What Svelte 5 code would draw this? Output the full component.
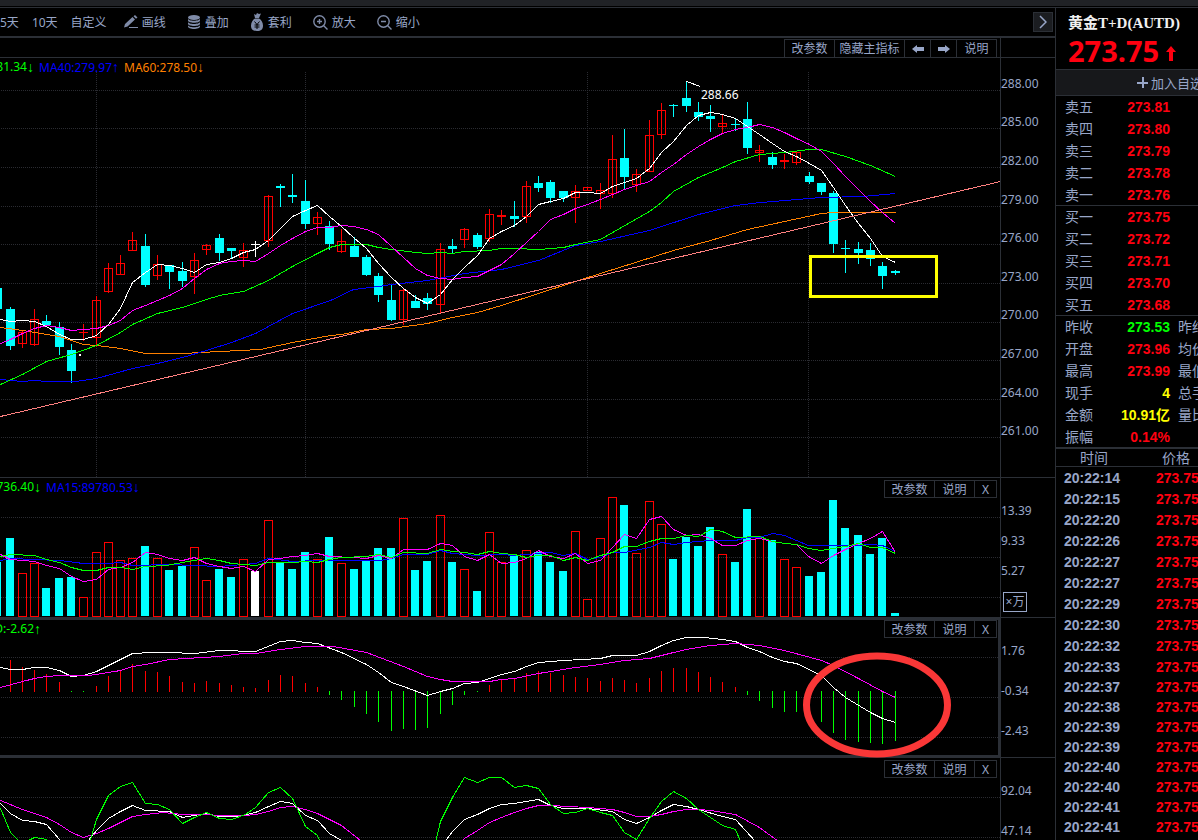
<script>
	// up = hollow red, down = solid cyan, flat = white
	// high, body top, body bottom, low, direction, volume top, macd end
	const days = [
		[288, 288, 309, 309, 'down', 562, 691],
		[307, 309, 346, 350, 'down', 538, 660],
		[330, 332, 344, 348, 'up', 573, 667],
		[309, 319, 345, 346, 'up', 563, 670],
		[315, 321, 325, 325, 'down', 588, 674],
		[322, 327, 347, 355, 'down', 578, 682],
		[344, 350, 371, 383, 'down', 577, 692],
		[324, 332, 333, 341, 'up', 597, 692],
		[296, 300, 338, 347, 'up', 552, 686],
		[263, 268, 292, 293, 'up', 542, 676],
		[255, 263, 275, 275, 'up', 560, 670],
		[232, 240, 251, 251, 'up', 558, 664],
		[234, 246, 285, 287, 'down', 546, 671],
		[255, 264, 276, 280, 'up', 558, 672],
		[265, 265, 272, 289, 'down', 570, 676],
		[262, 271, 281, 287, 'down', 566, 682],
		[253, 260, 277, 294, 'up', 547, 683],
		[244, 245, 250, 255, 'up', 580, 681],
		[234, 238, 253, 261, 'down', 569, 683],
		[248, 248, 251, 259, 'down', 577, 685],
		[243, 250, 258, 267, 'up', 559, 687],
		[241, 244, 245, 257, 'flat', 571, 688],
		[195, 196, 241, 247, 'up', 520, 680],
		[184, 186, 188, 207, 'down', 562, 675],
		[174, 195, 197, 203, 'down', 569, 676],
		[180, 201, 224, 229, 'down', 552, 683],
		[212, 217, 224, 235, 'up', 559, 687],
		[221, 226, 244, 250, 'down', 537, 695],
		[229, 241, 252, 253, 'up', 563, 700],
		[237, 246, 257, 257, 'down', 569, 707],
		[255, 257, 275, 276, 'down', 561, 714],
		[273, 276, 295, 302, 'down', 548, 722],
		[285, 300, 320, 321, 'down', 548, 731],
		[288, 290, 320, 325, 'up', 518, 729],
		[295, 301, 308, 308, 'down', 570, 730],
		[293, 298, 304, 310, 'down', 561, 728],
		[243, 249, 305, 313, 'up', 515, 714],
		[239, 246, 249, 253, 'down', 562, 705],
		[228, 229, 240, 248, 'up', 569, 695],
		[233, 235, 247, 249, 'down', 591, 692],
		[209, 214, 239, 242, 'up', 532, 685],
		[210, 215, 217, 225, 'up', 562, 680],
		[201, 216, 219, 227, 'down', 555, 679],
		[181, 186, 217, 223, 'up', 550, 673],
		[176, 183, 188, 192, 'down', 552, 671],
		[180, 182, 198, 203, 'down', 562, 673],
		[191, 191, 198, 202, 'down', 571, 675],
		[185, 191, 198, 223, 'up', 531, 677],
		[187, 187, 191, 191, 'up', 599, 678],
		[183, 190, 194, 209, 'up', 538, 681],
		[135, 159, 194, 198, 'up', 497, 678],
		[129, 158, 177, 189, 'down', 505, 680],
		[169, 174, 185, 192, 'up', 553, 683],
		[120, 135, 172, 172, 'up', 501, 678],
		[103, 110, 135, 139, 'up', 524, 671],
		[104, 105, 106, 117, 'down', 559, 668],
		[82, 98, 106, 112, 'down', 537, 668],
		[102, 112, 117, 121, 'down', 546, 672],
		[105, 116, 119, 132, 'down', 527, 677],
		[115, 123, 127, 133, 'up', 554, 682],
		[118, 124, 125, 131, 'down', 562, 687],
		[102, 119, 148, 154, 'down', 509, 695],
		[145, 150, 153, 162, 'up', 537, 701],
		[152, 157, 165, 169, 'down', 540, 708],
		[154, 160, 162, 169, 'up', 559, 712],
		[152, 152, 163, 165, 'up', 567, 712],
		[172, 176, 182, 184, 'down', 576, 714],
		[183, 183, 192, 195, 'down', 572, 722],
		[191, 193, 244, 253, 'down', 500, 733],
		[240, 248, 249, 273, 'down', 528, 740],
		[242, 249, 253, 264, 'down', 535, 742],
		[243, 250, 259, 266, 'down', 554, 743],
		[262, 266, 276, 289, 'down', 538, 744],
		[270, 271, 273, 275, 'down', 613, 741]
	].map(([high, top, bottom, low, dir, vol, macd], i) => ({
		x: Math.floor(10.05 + 12.292 * (i - 1)),
		high, top, bottom, low, dir, vol, macd
	}))

	const priceLines = {
		ma60: '0,327 22,330 59,336 83,344 96,345 120,348 145,353 182,353 219,351 260,349 292,342 330,335 341,334 366,329 391,328 427,323 452,317 477,312 501,305 538,293 575,281 600,273 673,250 710,240 747,229 784,221 821,213 833,212 895,212',
		ma40: '0,379 22,381 34,380 46,381 75,381 96,378 132,368 157,363 182,357 206,350 231,342 255,333 292,313 330,300 353,289 378,286 391,284 427,280 464,273 501,269 538,260 575,245 600,241 649,230 698,214 735,205 760,202 821,197 862,196 895,193',
		ma20: '0,384 22,374 46,361 71,354 96,345 120,332 132,324 157,313 182,307 206,299 219,295 243,291 268,280 292,266 317,253 329,247 341,244 366,244 378,247 391,249 415,252 427,253 440,252 452,253 464,251 489,250 501,248 514,248 538,249 563,247 575,244 600,239 649,211 661,202 673,191 698,177 722,167 735,161 759,154 784,152 809,149 821,149 845,156 870,165 895,176',
		ma10: '0,343 10,339 22,333 34,328 46,325 59,327 71,330 83,329 96,328 108,325 120,320 132,310 145,305 157,300 169,295 182,288 194,278 206,269 219,263 231,261 243,260 255,261 268,253 280,245 292,238 305,231 317,227 329,227 341,225 353,226 366,229 378,234 391,246 403,257 415,268 427,275 440,278 452,279 464,277 477,276 489,270 501,264 514,253 526,242 538,231 550,219 563,214 575,208 587,204 600,199 612,194 624,189 636,185 649,181 661,172 673,164 686,154 698,146 710,139 722,133 735,129 747,127 759,124 772,127 784,132 796,138 809,144 821,151 833,163 845,176 858,189 870,201 882,212 895,223',
		ma5: '0,319 10,321 22,320 34,321 46,326 59,334 71,339 83,339 96,335 108,324 120,308 132,282 145,272 157,264 169,265 182,268 194,272 206,264 219,262 231,258 243,252 255,249 268,240 280,228 292,216 305,210 317,205 329,216 341,226 353,237 366,248 378,263 391,277 403,288 415,297 427,303 440,294 452,279 464,267 477,255 489,238 501,231 514,225 526,216 538,204 550,201 563,198 575,192 587,192 600,193 612,186 624,182 636,178 649,168 661,152 673,141 686,125 698,115 710,112 722,114 735,118 747,126 759,134 772,143 784,151 796,156 809,163 821,170 833,187 845,205 858,223 870,238 882,256 895,262',
		trend: '0,416 1000,181'
	}
	const volumeLines = {
		ma40: '0,560 10,558 34,559 59,560 83,563 108,563 120,562 132,565 169,564 194,565 219,566 243,564 255,563 268,558 292,561 317,560 380,560 391,558 403,554 427,554 440,550 452,553 477,555 501,554 514,555 550,552 563,555 575,553 587,559 600,557 612,552 624,552 649,547 661,542 673,544 686,542 710,540 735,540 747,537 759,537 772,533 784,535 796,540 808,545 858,545 870,544 882,545 895,551',
		ma10: '0,554 10,559 22,560 34,561 46,565 59,568 71,576 83,581 96,579 108,569 120,567 132,562 145,552 157,554 169,558 182,560 194,557 206,563 219,566 231,568 243,566 255,571 268,559 280,558 292,556 305,555 317,553 329,556 353,557 366,558 378,555 391,558 403,549 427,549 440,543 452,545 464,556 477,560 489,554 501,563 514,562 526,558 538,550 550,556 563,558 575,553 587,563 600,560 612,547 624,534 636,538 649,519 661,516 673,529 686,535 698,534 710,538 722,545 735,545 747,540 759,538 772,541 784,543 796,544 808,556 821,563 833,555 845,549 858,543 870,538 882,531 895,552',
		ma20: '0,556 10,554 34,555 46,559 59,562 71,567 83,570 96,570 108,567 120,567 132,569 145,566 166,565 182,562 206,558 219,560 231,563 255,565 268,562 292,562 305,561 317,562 329,559 341,557 366,556 378,554 391,557 403,552 427,553 440,549 452,551 464,552 477,554 489,551 501,553 514,554 526,557 538,555 550,555 563,560 575,557 587,560 600,555 612,552 624,546 636,546 649,541 661,538 673,538 686,535 698,536 710,529 722,531 735,537 759,536 772,541 784,543 796,544 808,548 821,550 833,548 845,546 858,543 870,547 882,547 895,553'
	}
	const macdLines = {
		ma5: '0,667 10,669 22,669 34,667 46,667 59,670 71,676 83,675 96,671 132,653 151,652 169,652 194,653 219,650 255,651 280,641 292,640 305,642 317,643 341,652 366,664 378,672 391,682 403,686 427,695 440,691 452,688 464,683 477,682 489,678 501,674 514,671 526,666 538,662 563,660 600,658 612,655 636,655 649,651 661,645 673,640 686,637 704,637 722,639 735,641 747,647 759,651 772,657 784,661 796,663 821,675 833,687 845,697 870,712 882,718 895,722',
		ma10: '0,687 22,681 34,678 46,676 59,675 88,675 96,674 120,670 132,666 145,664 169,659 219,656 243,653 255,653 280,649 305,646 333,646 366,652 403,666 427,676 440,679 452,681 489,681 501,679 514,678 538,673 575,667 600,664 624,660 649,658 673,652 686,649 710,645 735,643 759,645 784,650 821,660 833,665 858,678 882,691 895,697'
	}
	const kdjLines = {
		ma5: '0,803 10,813 22,820 34,821 46,824 59,839 64,846 83,846 96,830 108,818 120,811 132,805 145,810 169,811 182,817 194,815 206,813 219,816 238,816 255,812 268,806 280,801 292,803 305,815 317,820 329,833 341,840 353,850 438,850 452,831 464,819 477,814 489,808 501,804 514,803 526,801 538,799 550,805 563,808 587,808 612,811 624,819 636,823 649,817 661,810 673,804 686,806 698,809 722,816 735,819 755,841',
		ma10: '0,800 22,809 46,817 59,824 71,832 83,837 96,833 108,828 120,822 132,816 145,814 163,812 182,814 206,814 219,815 245,815 255,814 268,811 280,807 292,806 305,809 317,813 341,825 360,840 372,850 452,850 464,838 477,830 489,822 501,817 514,812 526,808 538,805 550,805 587,807 612,809 624,812 636,816 649,816 661,814 673,811 686,809 698,809 710,810 735,814 759,827 778,841',
		ma20: '0,808 10,832 18,840 28,840 34,837 46,839 52,846 88,846 96,819 108,795 120,786 132,782 145,803 157,804 169,809 182,823 194,817 206,812 219,818 231,819 245,814 255,807 268,792 280,787 292,798 305,826 317,835 322,846 434,846 440,821 452,797 464,777 477,782 489,777 501,777 514,787 526,785 538,788 550,804 563,813 575,812 587,808 600,812 612,815 624,832 636,839 649,818 661,801 673,791 686,798 698,809 722,825 735,829 742,846'
	}

	const priceGrid = [90, 128, 167, 206, 244, 283, 322, 360, 399, 437]
	const priceScale = ['288.00', '285.00', '282.00', '279.00', '276.00', '273.00', '270.00', '267.00', '264.00', '261.00']

	const quotes = [
		['卖五', '273.81', 'red'],
		['卖四', '273.80', 'red'],
		['卖三', '273.79', 'red'],
		['卖二', '273.78', 'red'],
		['卖一', '273.76', 'red'],
		['买一', '273.75', 'red'],
		['买二', '273.72', 'red'],
		['买三', '273.71', 'red'],
		['买四', '273.70', 'red'],
		['买五', '273.68', 'red'],
		['昨收', '273.53', 'green', '昨结'],
		['开盘', '273.96', 'red', '均价'],
		['最高', '273.99', 'red', '最低'],
		['现手', '4', 'yellow', '总手'],
		['金额', '10.91亿', 'yellow', '量比'],
		['振幅', '0.14%', 'red']
	]
	const trades = [
		'20:22:14', '20:22:15', '20:22:20', '20:22:26', '20:22:27', '20:22:27',
		'20:22:29', '20:22:30', '20:22:32', '20:22:33', '20:22:37', '20:22:38',
		'20:22:39', '20:22:39', '20:22:40', '20:22:40', '20:22:41', '20:22:41'
	]
</script>

{#snippet grid(rows)}
	{#each rows as y}
		<line class="grid" x1="1" x2="1000" y1={y + 0.5} y2={y + 0.5} />
	{/each}
{/snippet}

{#snippet curves(lines)}
	{#each Object.entries(lines) as [name, points]}
		<polyline class="curve {name}" {points} transform="translate(0.5 0.5)" />
	{/each}
{/snippet}

{#snippet panelTools()}
	<div class="tools over">
		<button class="wide">改参数</button>
		<button class="mid">说明</button>
		<button class="close">X</button>
	</div>
{/snippet}

<div class="app">
	<div class="strip"></div>
	<div class="body">
		<main>
			<nav>
				<div class="periods">
					<button>5天</button>
					<button>10天</button>
					<button>自定义</button>
				</div>
				<div class="actions">
					<button>
						<svg width="14" height="14" viewBox="0 0 14 14" fill="currentColor"><path d="M0 12.500l1-3.500 7.500-7 2.500 2.500-7.500 7zM9.500 1.300L11 0l2.500 2.500-1.500 1.300zM5 12h9v1H5z" /></svg>
						画线
					</button>
					<button>
						<svg width="14" height="14" viewBox="0 0 14 14" fill="currentColor"><ellipse cx="7" cy="2.500" rx="6" ry="2.500" /><path d="M1 3.500c0 3 12 3 12 0v2c0 3-12 3-12 0zM1 6.700c0 3 12 3 12 0v2c0 3-12 3-12 0zM1 9.900c0 3 12 3 12 0v1.600c0 3.300-12 3.300-12 0z" /></svg>
						叠加
					</button>
					<button>
						<svg width="14" height="18" viewBox="0 0 14 18"><path fill="currentColor" d="M4 1l2 1 1-2 2 1 2-.500L9 5H5zM5 5.500h4c2 1 4 4 4 7 0 4-2 5.500-6 5.500s-6-1.500-6-5.500c0-3 2-6 4-7z" /><path d="M4.500 8.500L7 11.500l2.500-3M7 11v5M4.500 12h5M4.500 14h5" fill="none" stroke="#000" /></svg>
						套利
					</button>
					<button>
						<svg width="15" height="15" viewBox="0 0 15 15" fill="none" stroke="currentColor" stroke-width="1.400"><circle cx="6.500" cy="6.500" r="5.700" /><path d="M10.500 10.500l4 4M4 6.500h5M6.500 4v5" /></svg>
						放大
					</button>
					<button>
						<svg width="15" height="15" viewBox="0 0 15 15" fill="none" stroke="currentColor" stroke-width="1.400"><circle cx="6.500" cy="6.500" r="5.700" /><path d="M10.500 10.500l4 4M4 6.500h5" /></svg>
						缩小
					</button>
				</div>
				<button class="fold" aria-label="收起">
					<svg width="8" height="14" viewBox="0 0 8 14" fill="none" stroke="currentColor" stroke-width="1.500"><path d="M1 1l6 6-6 6" /></svg>
				</button>
			</nav>

			<div class="head">
				<div class="tools">
					<button class="wide">改参数</button>
					<button class="widest">隐藏主指标</button>
					<button class="arrow" aria-label="左移"><svg width="12" height="8" viewBox="0 0 12 8" fill="currentColor"><path d="M0 4l5-4v2h7v4H5v2z" /></svg></button>
					<button class="arrow" aria-label="右移"><svg width="12" height="8" viewBox="0 0 12 8" fill="currentColor"><path d="M12 4L7 0v2H0v4h7v2z" /></svg></button>
					<button class="mid">说明</button>
				</div>
				<div class="gutter"></div>
			</div>

			<section class="price">
				<div class="chart">
					<svg viewBox="0 58 1000 419" shape-rendering="crispEdges">
						{@render grid(priceGrid)}
						{#each [96, 305, 587, 808] as x}
							<line class="grid" x1={x + 0.5} x2={x + 0.5} y1="72" y2="477" />
						{/each}
						{#each days as d}
							<g class={d.dir}>
								<rect class="fill" x={d.x} y={d.high} width="1" height={d.low - d.high} />
								{#if d.dir == 'up' && d.bottom - d.top > 2}
									<rect class="hollow" x={d.x - 3.5} y={d.top + 0.5} width="8" height={d.bottom - d.top - 1} />
								{:else}
									<rect class="fill" x={d.x - 4} y={d.top} width="9" height={d.bottom - d.top} />
								{/if}
							</g>
						{/each}
						{@render curves(priceLines)}
						<rect x="79" y="354" width="2" height="2" fill="#fff" />
						<path class="curve ma5" d="M686.500 81.500l14 5" />
						<text x="701" y="99">288.66</text>
						<rect class="mark" x="810.500" y="256.500" width="126" height="40" />
					</svg>
					<div class="legend">
						<span class="first ma20">81.34<i>↓</i></span>
						<span class="ma40">MA40:279.97<i>↑</i></span>
						<span class="ma60">MA60:278.50<i>↓</i></span>
					</div>
				</div>
				<div class="axis">
					{#each priceScale as p}<span>{p}</span>{/each}
				</div>
			</section>

			<section class="volume">
				<div class="chart">
					<svg viewBox="0 478 1000 139" shape-rendering="crispEdges">
						{@render grid([517, 557, 597])}
						{#each days as d}
							<g class={d.dir}>
								{#if d.dir == 'up'}
									<rect class="hollow" x={d.x - 3.5} y={d.vol + 0.5} width="8" height={616 - d.vol} />
								{:else}
									<rect class="fill" x={d.x - 4} y={d.vol} width="8" height={616 - d.vol} />
								{/if}
							</g>
						{/each}
						{@render curves(volumeLines)}
					</svg>
					<div class="legend">
						<span class="second ma20">736.40<i>↓</i></span>
						<span class="ma40">MA15:89780.53<i>↓</i></span>
					</div>
					{@render panelTools()}
				</div>
				<div class="axis">
					<span>13.39</span>
					<span>9.33</span>
					<span>5.27</span>
					<b>×万</b>
				</div>
			</section>

			<section class="macd">
				<div class="chart">
					<svg viewBox="0 620 1000 135" shape-rendering="crispEdges">
						{@render grid([657, 697, 737])}
						{#each days as d}
							{#if d.macd < 691}
								<rect class="rise" x={d.x} y={d.macd} width="1" height={692 - d.macd} />
							{:else if d.macd > 691}
								<rect class="fall" x={d.x} y="691" width="1" height={d.macd - 691} />
							{/if}
						{/each}
						{@render curves(macdLines)}
						<rect x="998" y="620" width="2" height="135" fill="#2b2f36" />
						<ellipse class="ring" cx="877" cy="705" rx="70.500" ry="49" shape-rendering="auto" />
					</svg>
					<div class="legend">
						<span class="second ma20">D:-2.62<i>↑</i></span>
					</div>
					{@render panelTools()}
				</div>
				<div class="axis">
					<span>1.76</span>
					<span>-0.34</span>
					<span>-2.43</span>
				</div>
			</section>

			<section class="kdj">
				<div class="chart">
					<svg viewBox="0 758 1000 82" shape-rendering="crispEdges">
						{@render grid([797, 837])}
						{@render curves(kdjLines)}
					</svg>
					{@render panelTools()}
				</div>
				<div class="axis">
					<span>92.04</span>
					<span>47.14</span>
				</div>
			</section>
		</main>

		<aside>
			<header>
				<h1>黄金T+D(AUTD)</h1>
				<p>
					273.75
					<svg width="10" height="15" viewBox="0 0 10 15" fill="currentColor"><path d="M5 0l5 6H7v9H3V6H0z" /></svg>
				</p>
			</header>
			<button class="add">
				<svg width="11" height="11" viewBox="0 0 11 11" fill="currentColor"><path d="M5 0h2v5h4v2H7v4H5V7H0V5h5z" /></svg>
				加入自选
			</button>
			<table class="quotes">
				<tbody>
					{#each quotes as [label, value, color, extra], i}
						<tr class:line={i == 5 || i == 10}>
							<th>{label}</th>
							<td class={color}>{value}</td>
							<th>{extra ?? ''}</th>
						</tr>
					{/each}
				</tbody>
			</table>
			<table class="trades">
				<thead>
					<tr><th>时间</th><th>价格</th></tr>
				</thead>
				<tbody>
					{#each trades as t}
						<tr><td>{t}</td><td class="red">273.75</td></tr>
					{/each}
				</tbody>
			</table>
		</aside>
	</div>
</div>

<style>
	:global(body) {
		background: #000;
		overflow: hidden;
	}

	.app {
		font-family: "Noto Sans", "Noto Sans CJK SC", sans-serif;
		font-size: 12px;
		color: #98a6c8;
		background: #000;
	}
	.strip {
		height: 6px;
		background: #202226;
		border-bottom: 1px solid #000;
	}
	.body {
		display: flex;
		border-top: 1px solid #2b2f36;
	}
	main {
		flex: 1;
		min-width: 0;
	}
	button {
		display: flex;
		align-items: center;
		justify-content: center;
		padding: 0;
		border: 0;
		background: none;
		color: inherit;
		font: inherit;
		white-space: nowrap;
	}

	nav {
		display: flex;
		align-items: center;
		height: 28px;
		border-bottom: 2px solid #2b2f36;
	}
	.periods {
		display: flex;
		gap: 13px;
	}
	.actions {
		display: flex;
		gap: 21px;
		margin-left: 17px;
	}
	.actions button {
		gap: 4px;
	}
	.actions svg {
		color: #7f8ba8;
	}
	.fold {
		width: 20px;
		height: 20px;
		margin-left: auto;
		margin-right: 2px;
		background: #1b1d21;
		border: 1px solid #2b2f36;
		box-sizing: border-box;
	}

	.head {
		display: flex;
		justify-content: flex-end;
		align-items: flex-end;
		height: 19px;
		border-bottom: 1px solid #2b2f36;
	}
	.gutter {
		align-self: stretch;
		width: 54px;
		margin-left: 3px;
		border-left: 1px solid #2b2f36;
	}
	.tools {
		display: flex;
	}
	.tools button {
		height: 18px;
		margin-left: -1px;
		padding-top: 1px;
		border: 1px solid #2b2f36;
		box-sizing: border-box;
		background: #000;
		line-height: 16px;
	}
	.head button {
		border-bottom: 0;
	}
	.over {
		position: absolute;
		top: 2px;
		right: 3px;
	}
	.macd .over, .macd .legend {
		top: 0;
	}
	.tools .wide { width: 51px; }
	.tools .widest { width: 71px; }
	.tools .arrow { width: 27px; }
	.tools .mid { width: 41px; }
	.tools .close { width: 23px; }

	section {
		display: flex;
	}
	.chart {
		position: relative;
		flex: 1;
		min-width: 0;
	}
	.chart > svg {
		display: block;
		width: 100%;
		height: auto;
	}
	.axis {
		display: flex;
		flex-direction: column;
		width: 55px;
		box-sizing: border-box;
		border-left: 1px solid #2b2f36;
	}
	.axis span {
		display: flex;
		align-items: center;
		height: 40px;
	}
	.price .chart, .price .axis {
		border-bottom: 1px solid #2b2f36;
	}
	.price .axis {
		padding: 6px 0 27px;
	}
	.price .axis span {
		flex: 1;
		height: auto;
	}
	.volume .axis {
		padding-top: 17px;
	}
	.volume .axis span {
		height: 30px;
	}
	.axis b {
		width: 22px;
		margin: 7px 0 0 2px;
		border: 1px solid #98a6c8;
		font-weight: normal;
		line-height: 18px;
		text-align: center;
	}
	.macd .chart {
		border-top: 3px solid #2b2f36;
		border-bottom: 3px solid #2b2f36;
		z-index: 1;
	}
	.macd .axis {
		padding-top: 12px;
		border-top: 1px solid #2b2f36;
	}
	.macd svg {
		overflow: visible;
	}
	.kdj .axis {
		padding-top: 12px;
		margin-top: -1px;
		border-top: 1px solid #2b2f36;
	}

	.legend {
		position: absolute;
		top: 0;
		left: 0;
		display: flex;
		gap: 5px;
		line-height: 18px;
	}
	.legend span {
		white-space: nowrap;
	}
	.legend .first, .legend .second {
		display: flex;
		justify-content: flex-end;
		width: 34px;
	}
	.legend .second {
		width: 41px;
	}
	.legend i {
		font: 14px/18px "Liberation Sans", sans-serif;
	}

	.grid {
		stroke: #2a2b31;
		stroke-dasharray: 1 1;
	}
	.curve {
		fill: none;
	}
	.ma5 { stroke: #fff; }
	.ma10 { stroke: #f0f; }
	.ma20 { stroke: #0f0; }
	.ma40 { stroke: #00f; }
	.ma60 { stroke: #ff8000; }
	.trend { stroke: #ff8080; }
	span.ma20 { color: #0f0; stroke: none; }
	span.ma40 { color: #00f; stroke: none; }
	span.ma60 { color: #ff8000; stroke: none; }
	.up .fill { fill: #f00; }
	.up .hollow { fill: none; stroke: #f00; }
	.down .fill { fill: #0ff; }
	.flat .fill { fill: #fff; }
	.rise { fill: #f00; }
	.fall { fill: #0f0; }
	text { fill: #fff; }
	.mark {
		fill: none;
		stroke: #ff0;
		stroke-width: 3;
	}
	.ring {
		fill: none;
		stroke: #fa3737;
		stroke-width: 7;
	}

	aside {
		width: 143px;
		box-sizing: border-box;
		border-left: 1px solid #2b2f36;
		overflow: hidden;
	}
	header {
		height: 61px;
		padding-left: 12px;
	}
	h1 {
		margin: 0;
		padding-top: 5px;
		color: #f0f0f0;
		font: bold 15px/20px "Liberation Serif", "Noto Sans CJK SC", serif;
		white-space: nowrap;
	}
	header p {
		display: flex;
		align-items: center;
		gap: 7px;
		margin: 0;
		color: #ff0010;
		font-size: 29px;
		font-weight: bold;
		line-height: 36px;
	}
	header svg {
		margin-top: 4px;
	}
	.add {
		width: 100%;
		height: 27px;
		justify-content: flex-start;
		gap: 3px;
		padding: 0 0 2px 81px;
		border-top: 1px solid #2b2f36;
		background: #17181b;
		box-sizing: border-box;
		font-size: 13px;
	}
	.add svg {
		flex: none;
	}

	table {
		table-layout: fixed;
		border-spacing: 0;
		font-size: 14px;
		line-height: 18px;
	}
	th, td {
		box-sizing: border-box;
		padding: 0;
		white-space: nowrap;
		text-align: left;
	}
	th {
		font-weight: normal;
	}
	td {
		font-family: "Liberation Sans", "Noto Sans CJK SC", sans-serif;
		font-weight: bold;
	}
	.quotes {
		width: 150px;
		margin-top: -1px;
	}
	.quotes tr > * {
		height: 22px;
		padding-top: 1px;
	}
	.quotes tr:first-child > *, .quotes .line > * {
		padding-top: 0;
		border-top: 1px solid #2b2f36;
	}
	.quotes th:first-child {
		width: 48px;
		padding-left: 9px;
	}
	.quotes td {
		width: 66px;
		text-align: right;
	}
	.quotes th:last-child {
		padding-left: 8px;
	}
	.trades {
		width: 150px;
		border-top: 2px solid #2b2f36;
	}
	.trades th {
		height: 18px;
		line-height: 17px;
		border-bottom: 1px solid #2b2f36;
		padding-left: 6px;
	}
	.trades th:first-child {
		width: 100px;
		padding-left: 24px;
	}
	.trades td {
		height: 21px;
	}
	.trades tr:nth-child(n + 11) td {
		height: 20px;
	}
	.trades td:first-child {
		padding-left: 8px;
	}
	.red { color: #ff0010; }
	.green { color: #0f0; }
	.yellow { color: #ff0; }
</style>
